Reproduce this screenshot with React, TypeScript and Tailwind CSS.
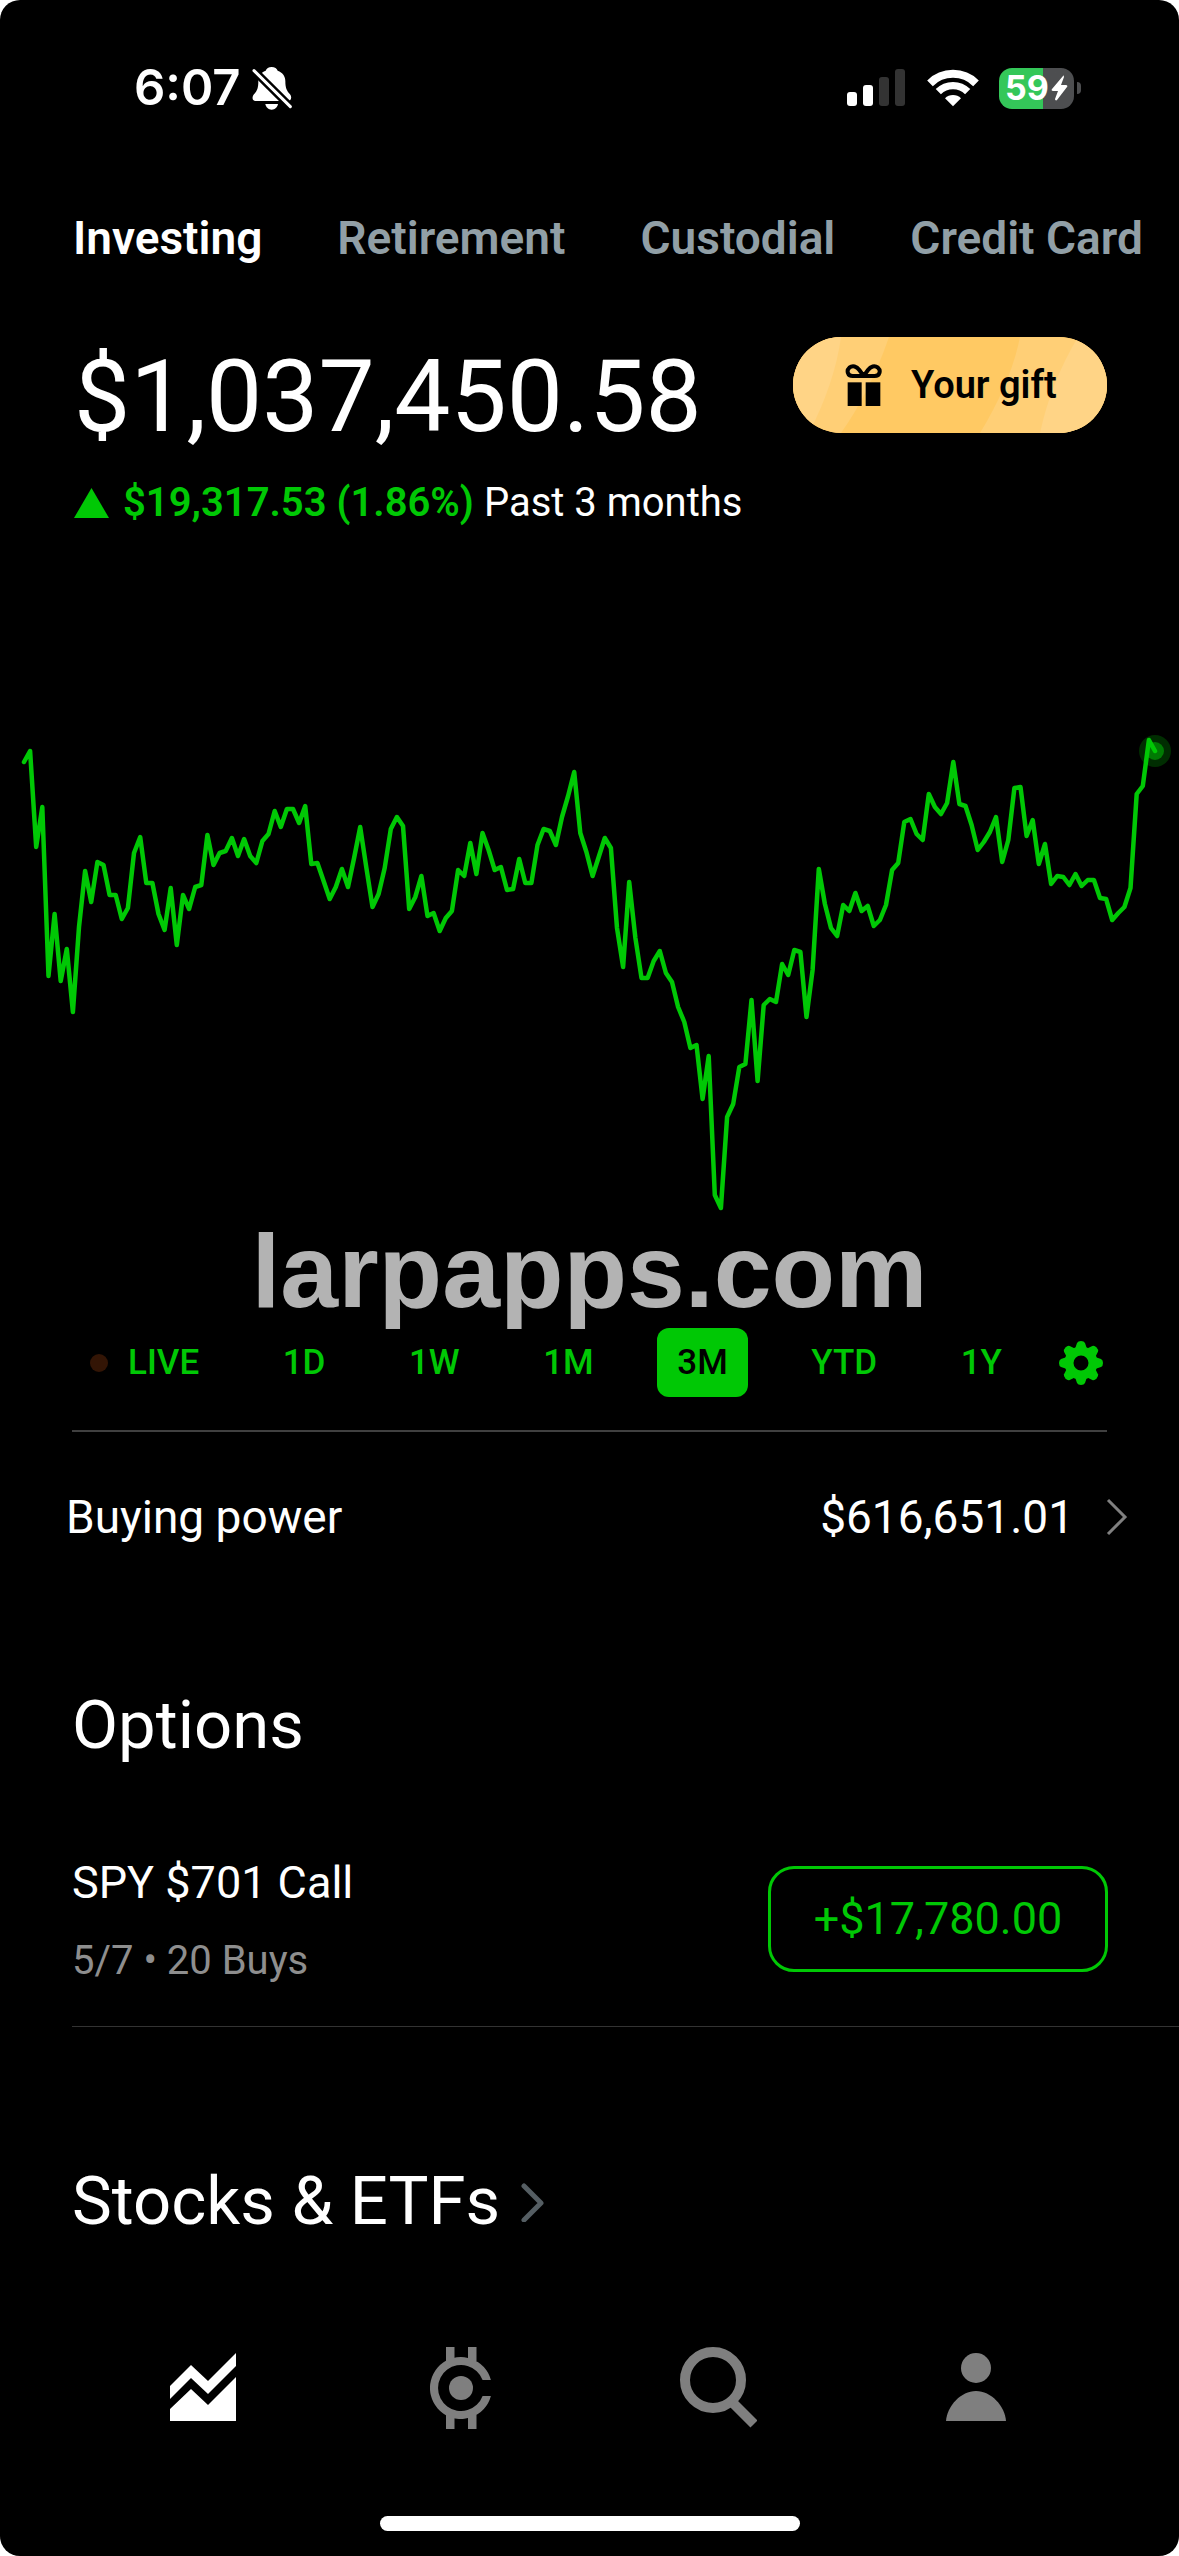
import { useState } from 'react';

const accountTabs = ['Investing', 'Retirement', 'Custodial', 'Credit Card'];

const ranges = ['LIVE', '1D', '1W', '1M', '3M', 'YTD', '1Y'];

// Portfolio value over the past 3 months, as y offsets in the chart
const history = [
  62, 51, 147, 107, 276, 214, 281, 249, 312, 227, 171, 202, 162, 165, 195, 195, 219, 208, 153, 137,
  183, 183, 214, 230, 188, 245, 195, 209, 187, 185, 135, 165, 153, 151, 138, 156, 139, 156, 163, 141,
  134, 111, 127, 109, 109, 123, 106, 164, 163, 181, 199, 187, 169, 187, 158, 127, 168, 207, 194, 168,
  129, 117, 126, 209, 197, 176, 216, 213, 231, 218, 211, 170, 176, 143, 174, 133, 150, 170, 167, 190,
  189, 159, 183, 183, 145, 129, 131, 145, 117, 96, 72, 133, 152, 176, 157, 138, 148, 228, 267, 182,
  238, 278, 278, 261, 251, 273, 282, 307, 322, 348, 345, 399, 356, 495, 508, 417, 404, 367, 364, 300,
  381, 305, 299, 302, 264, 275, 250, 252, 317, 270, 169, 204, 228, 236, 205, 211, 193, 211, 206, 226,
  220, 205, 170, 163, 122, 119, 134, 140, 94, 107, 114, 103, 62, 104, 106, 125, 150, 142, 132, 117,
  162, 140, 88, 87, 136, 120, 164, 144, 184, 176, 177, 185, 174, 186, 180, 180, 198, 199, 220, 213,
  207, 188, 94, 86, 40, 51,
];

const CHART_START = 24;
const CHART_END = 1155;

function StatusBar() {
  return (
    <div className="flex h-[176px] items-center justify-between pl-[134px] pr-[98px]">
      <div className="flex items-center gap-[11px]">
        <span className="font-['Inter'] text-[49px] leading-[60px] font-semibold">6:07</span>
        <svg className="h-[44px] w-[40px]" viewBox="400 48 120 132" fill="none">
          <path
            d="M459 51c-9 0-16 5-18 11-15 5-22 17-22 31 0 21-3 29-13 40-6 7-7 20 5 20h96c12 0 13-13 7-20-10-11-14-19-14-40 0-14-8-26-23-31-2-6-9-11-18-11z"
            fill="#fff"
          />
          <path d="M440 162h38c-2 10-9 17-19 17s-17-7-19-17z" fill="#fff" />
          <path d="M398 54l125 124" stroke="#000" strokeWidth="24" />
          <path d="M406 62l109 108" stroke="#fff" strokeWidth="9" strokeLinecap="round" />
        </svg>
      </div>
      <div className="flex items-center">
        <svg className="h-[38px] w-[58px]" viewBox="0 0 58 38">
          <rect x="0" y="23" width="10" height="14" rx="3" fill="#fff" />
          <rect x="16" y="16" width="10" height="21" rx="3" fill="#fff" />
          <rect x="32" y="8" width="10" height="29" rx="3" fill="#333" />
          <rect x="48" y="0" width="10" height="37" rx="3" fill="#333" />
        </svg>
        <svg className="ml-[22px] h-[38px] w-[52px]" viewBox="317 56 156 114" fill="none" stroke="#fff">
          <path d="M326 99a98 98 0 0 1 138 0" strokeWidth="24" />
          <path d="M351 124a62 62 0 0 1 88 0" strokeWidth="22" />
          <path d="M395 168l-24-24a34 34 0 0 1 48 0z" fill="#fff" stroke="none" />
        </svg>
        <div className="ml-[20px] flex h-[41px] w-[75px] items-center justify-center gap-[2px] rounded-[13px] bg-linear-to-r from-[#34c759] from-59% to-[#4d4e50] to-59%">
          <span className="font-['Inter'] text-[34px] leading-[40px] font-bold">59</span>
          <svg className="h-[26px] w-[17px]" viewBox="0 0 17 26" fill="#fff">
            <path d="M12 1L1 14c-1 1 0 2 1 2h5L4 24c0 1 1 2 2 1l10-13c1-1 0-2-1-2h-5l3-8c0-1-1-2-1-1z" />
          </svg>
        </div>
        <span className="ml-[3px] h-[12px] w-[4px] rounded-r-full bg-[#4d4e50]" />
      </div>
    </div>
  );
}

function GiftButton() {
  return (
    <button className="relative flex h-24 w-[314px] items-center overflow-hidden rounded-full bg-[#ffc963] pl-[52px] text-black">
      <svg className="absolute inset-0 h-full w-full" viewBox="0 0 314 96" preserveAspectRatio="none">
        <path d="M0 0H96Q77 55 48 96H0z" fill="#ffcf76" />
        <path d="M0 0H48Q42 45 16 96H0z" fill="#ffd486" />
        <path d="M227 0H314V96H187Q218 45 227 0z" fill="#ffcf76" />
        <path d="M285 0H314V96H247Q258 45 285 0z" fill="#ffd486" />
      </svg>
      <svg className="relative h-[44px] w-[38px]" viewBox="196 98 114 132" fill="none">
        <rect x="204" y="156" width="42" height="71" fill="#000" />
        <rect x="258" y="156" width="44" height="71" fill="#000" />
        <path
          d="M252 137h-33c-16 0-19-17-10-25 10-8 22-4 30 7zM252 137h33c16 0 19-17 10-25-10-8-22-4-30 7z"
          stroke="#000"
          strokeWidth="12"
          strokeLinejoin="round"
        />
      </svg>
      <span className="relative ml-7 text-[38px] leading-[48px] font-semibold">Your gift</span>
    </button>
  );
}

function PortfolioChart() {
  const step = (CHART_END - CHART_START) / (history.length - 1);
  const points = history.map((y, i) => `${(CHART_START + i * step).toFixed(1)},${y}`).join(' ');

  return (
    <svg className="h-auto w-full" viewBox="0 0 1179 520" fill="none">
      <circle cx={CHART_END} cy="51" r="16" fill="#002d01" />
      <circle cx={CHART_END} cy="51" r="9" fill="#007a03" />
      <polyline
        points={points}
        stroke="#00c805"
        strokeWidth="4.500"
        strokeLinecap="round"
        strokeLinejoin="round"
      />
    </svg>
  );
}

function GearIcon() {
  return (
    <svg className="h-[44px] w-[44px]" viewBox="-22 -22 44 44">
      <circle r="12" fill="none" stroke="#00c805" strokeWidth="9" />
      {[0, 45, 90, 135, 180, 225, 270, 315].map((angle) => (
        <path
          key={angle}
          d="M-6-14L-4-20q1-2 4-2t4 2L6-14z"
          fill="#00c805"
          transform={`rotate(${angle})`}
        />
      ))}
    </svg>
  );
}

function BottomNav() {
  return (
    <nav className="mt-[106px] grid grid-cols-4 px-[74px] text-[#7f7f7f]">
      <a href="#investing" aria-label="Investing" className="flex justify-center text-white">
        <svg className="h-[82px] w-[66px]" viewBox="0 0 66 82" fill="currentColor">
          <path d="M0 39L21 18L38 34L66 6V19L38 47L21 31L0 52z" />
          <path d="M0 62L21 42L38 58L66 30V74H0z" />
        </svg>
      </a>
      <a href="#crypto" aria-label="Crypto" className="flex justify-center">
        <svg className="h-[82px] w-[62px]" viewBox="-31 -41 62 82" fill="currentColor">
          <path d="M29.9-8A31 31 0 1 0 29.9 8H21.6A23 23 0 1 1 21.6-8z" />
          <path d="M-15-41h8.500v14h-8.500zM7-41h8.500v14h-8.500zM-15 27h8.500v14h-8.500zM7 27h8.500v14h-8.500z" />
          <circle r="12" />
        </svg>
      </a>
      <a href="#search" aria-label="Search" className="flex justify-center">
        <svg className="h-[82px] w-[78px]" viewBox="0 0 78 82" fill="none" stroke="currentColor" strokeWidth="10">
          <circle cx="34" cy="33" r="28" />
          <path d="M54 56L75 77" />
        </svg>
      </a>
      <a href="#account" aria-label="Account" className="flex justify-center">
        <svg className="h-[82px] w-[60px]" viewBox="0 0 60 82" fill="currentColor">
          <circle cx="30" cy="21" r="15" />
          <path d="M0 74C1 59 15 44 30 44S59 59 60 74z" />
        </svg>
      </a>
    </nav>
  );
}

export default function App() {
  const [account, setAccount] = useState('Investing');
  const [range, setRange] = useState('3M');

  return (
    <div className="bg-white">
      <div className="flex min-h-screen flex-col overflow-hidden rounded-[20px] bg-black font-['Roboto',sans-serif] text-white">
        <StatusBar />

        {/* Accounts */}
        <div className="mt-8 flex gap-[75px] pl-[73px] whitespace-nowrap">
          {accountTabs.map((tab) => (
            <button
              key={tab}
              onClick={() => setAccount(tab)}
              className={`text-[46px] leading-[60px] font-semibold ${tab === account ? 'text-white' : 'text-[#919fa6]'}`}
            >
              {tab}
            </button>
          ))}
        </div>

        {/* Balance */}
        <div className="mt-[69px] flex items-start justify-between pr-[72px] pl-[74px]">
          <h1 className="text-[100px] leading-[120px]">$1,037,450.58</h1>
          <GiftButton />
        </div>
        <div className="mt-5 flex items-center pl-[74px] text-[40px] leading-[52px]">
          <svg className="h-[30px] w-[35px]" viewBox="0 0 35 30" fill="#00c805">
            <path d="M17.500 0L35 30H0z" />
          </svg>
          <span className="ml-[14px] font-semibold text-[#00c805]">$19,317.53 (1.86%)</span>
          <span className="ml-[10px]">Past 3 months</span>
        </div>

        <div className="mt-[171px]">
          <PortfolioChart />
        </div>
        <p className="text-center font-['Liberation_Sans',sans-serif] text-[104px] leading-[102px] font-bold text-[#b3b3b3]">
          larpapps.com
        </p>

        {/* Chart ranges */}
        <div className="mt-[6px] flex items-center pr-[76px] pl-[90px]">
          <span className="h-[18px] w-[18px] rounded-full bg-[#331505]" />
          <div className="flex flex-1 justify-between">
            {ranges.map((item) => (
              <button
                key={item}
                onClick={() => setRange(item)}
                className={`h-[69px] rounded-xl px-5 text-[35px] leading-[44px] font-medium ${item === range ? 'bg-[#00c805] text-black' : 'text-[#00c805]'}`}
              >
                {item}
              </button>
            ))}
          </div>
          <button aria-label="Chart settings" className="ml-[37px]">
            <GearIcon />
          </button>
        </div>
        <div className="mx-[72px] mt-[33px] h-[2px] bg-[#404040]" />

        <a href="#buying-power" className="mt-[45px] flex items-center pr-[51px] pl-[66px] text-[46px] leading-[80px]">
          <span>Buying power</span>
          <span className="ml-auto">$616,651.01</span>
          <svg className="ml-8 h-[38px] w-[22px]" viewBox="0 0 22 38" fill="none">
            <path d="M2 2L19 19L2 36" stroke="#808080" strokeWidth="3" />
          </svg>
        </a>

        {/* Options */}
        <h2 className="mt-[128px] pl-[72px] text-[67px] leading-[80px]">Options</h2>
        <div className="mt-[88px] ml-[72px] flex items-center justify-between border-b border-[#333] pr-[71px] pb-[39px]">
          <div>
            <p className="text-[45px] leading-[60px]">SPY $701 Call</p>
            <p className="mt-[22px] text-[40px] leading-[52px] text-[#8e8e8e]">5/7 • 20 Buys</p>
          </div>
          <button className="mb-[3px] h-[106px] w-[340px] rounded-[26px] border-3 border-[#00c805] text-[45px] leading-[60px] text-[#00c805]">
            +$17,780.00
          </button>
        </div>

        {/* Stocks */}
        <a href="#stocks" className="mt-[134px] flex items-center pl-[72px]">
          <h2 className="text-[67px] leading-[80px]">Stocks &amp; ETFs</h2>
          <svg className="ml-[21px] h-[42px] w-[24px]" viewBox="0 0 24 42" fill="none">
            <path
              d="M3 6L20 23L3 40"
              stroke="#555e63"
              strokeWidth="5"
              strokeLinecap="round"
              strokeLinejoin="round"
            />
          </svg>
        </a>

        <BottomNav />
        <div className="mx-auto mt-[87px] mb-6 h-[15px] w-[420px] rounded-full bg-white" />
      </div>
    </div>
  );
}
